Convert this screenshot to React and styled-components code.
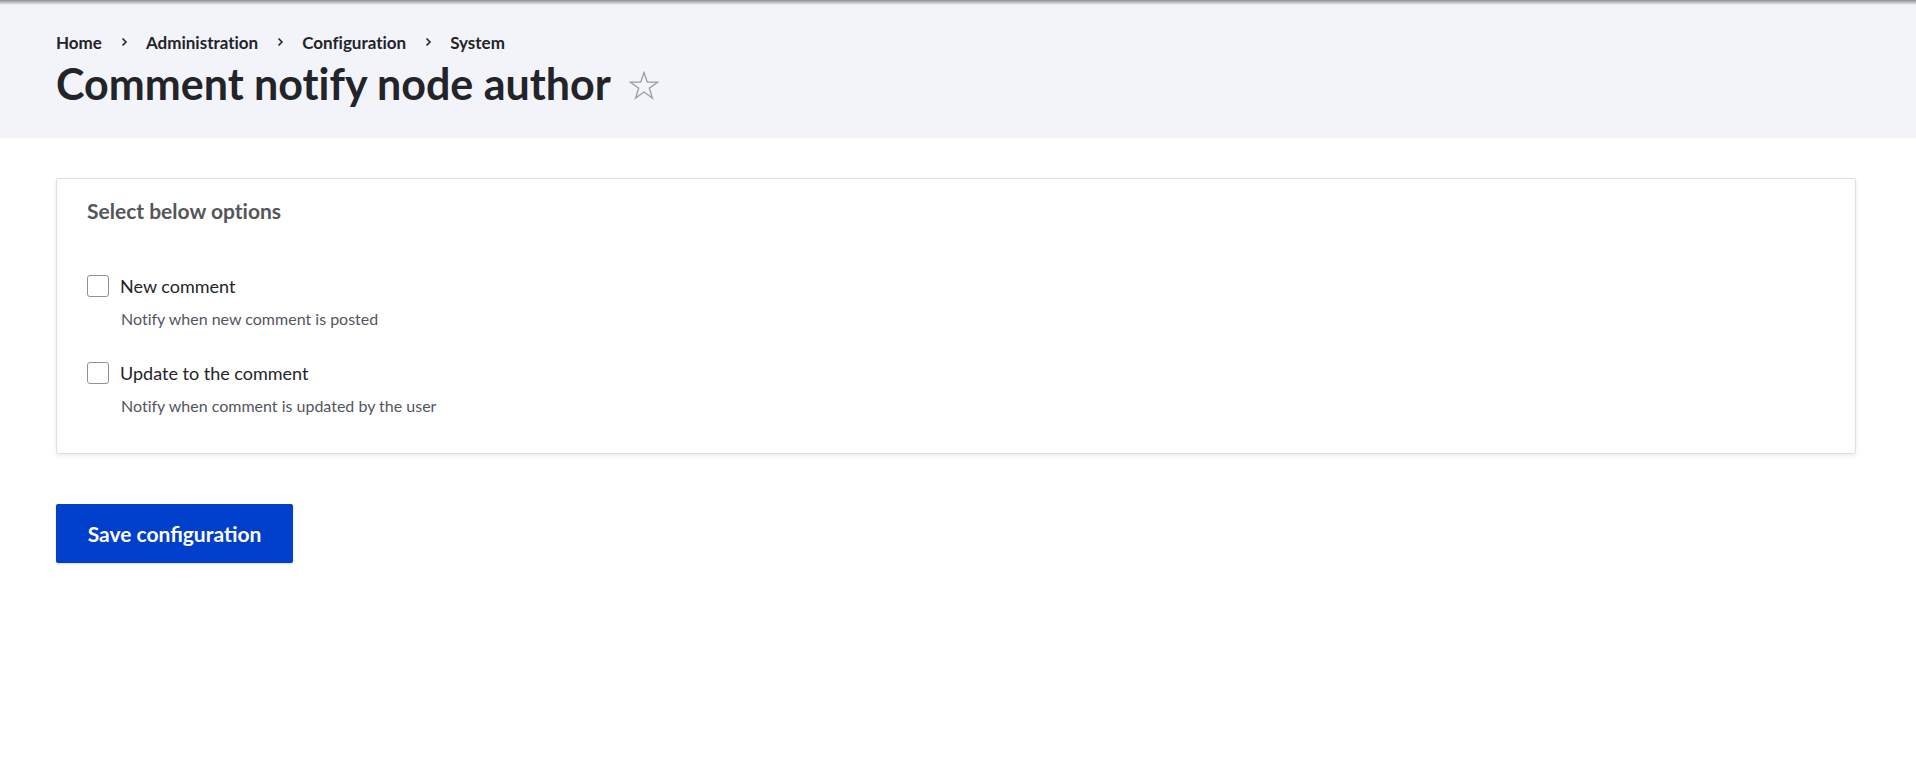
import { styled, createGlobalStyle } from "styled-components";

const GlobalStyle = createGlobalStyle`
  html, body {
    margin: 0;
    padding: 0;
    background: #ffffff;
  }
  body {
    font-family: Lato, "Open Sans", sans-serif;
    font-variant-ligatures: none;
    color: #232429;
  }
`;

const Page = styled.div`
  min-height: 768px;
  background: #ffffff;
`;

const Header = styled.header`
  position: relative;
  height: 138px;
  box-sizing: border-box;
  padding: 28px 56px 0 56px;
  background: #f3f4f9;

  &::before {
    content: "";
    position: absolute;
    left: 0;
    right: 0;
    top: 0;
    height: 5px;
    background: linear-gradient(rgba(0, 0, 0, 0.42), rgba(0, 0, 0, 0));
  }
`;

const Breadcrumb = styled.nav`
  display: flex;
  align-items: center;
  height: 28px;
  font-size: 17px;
  font-weight: 700;
  color: #232429;
`;

const Crumb = styled.span`
  display: inline-flex;
  align-items: center;
  white-space: nowrap;
`;

const Sep = styled.span`
  display: inline-flex;
  align-items: center;
  margin: 0 18px 0 19px;
`;

const TitleRow = styled.div`
  display: flex;
  align-items: center;
  margin-top: 1px;
`;

const Title = styled.h1`
  margin: 0;
  font-size: 43px;
  line-height: 54px;
  font-weight: 700;
  color: #232429;
`;

const Star = styled.span`
  display: inline-flex;
  margin-left: 18px;
  margin-top: 2px;
`;

const Main = styled.main`
  padding: 40px 60px 0 56px;
`;

const Card = styled.fieldset`
  margin: 0;
  min-width: 0;
  box-sizing: border-box;
  border: 1px solid #dedfe4;
  border-radius: 2px;
  box-shadow: 0 2px 4px rgba(0, 0, 0, 0.08);
  padding: 18px 30px 37px 30px;
`;

const Legend = styled.div`
  font-size: 21px;
  line-height: 28px;
  font-weight: 700;
  color: #55565b;
  margin-bottom: 48px;
`;

const Option = styled.div`
  display: flex;
  flex-direction: column;
  & + & {
    margin-top: 31px;
  }
`;

const OptionRow = styled.label`
  display: flex;
  align-items: center;
  gap: 11px;
  height: 26px;
  font-size: 18px;
  color: #232429;
  cursor: pointer;
`;

const Box = styled.span`
  width: 20px;
  height: 20px;
  border: 1px solid #8e929c;
  border-radius: 3px;
  background: #ffffff;
  flex-shrink: 0;
`;

const Description = styled.div`
  margin-left: 34px;
  margin-top: 10px;
  font-size: 16px;
  line-height: 20px;
  color: #545560;
`;

const Actions = styled.div`
  padding-top: 50px;
`;

const Button = styled.button`
  width: 237px;
  height: 59px;
  border: none;
  border-radius: 2px;
  background: #003ecc;
  color: #ffffff;
  font-family: Lato, "Open Sans", sans-serif;
  font-size: 21px;
  font-weight: 700;
  box-shadow: 0 1px 2px rgba(0, 0, 0, 0.15);
  cursor: pointer;
`;

function Chevron() {
  return (
    <svg width="7" height="10" viewBox="0 0 7 10" fill="none">
      <path d="M1.5 1.5 L5 5 L1.5 8.5" stroke="#232429" strokeWidth="1.6" />
    </svg>
  );
}

function StarIcon() {
  return (
    <svg width="30" height="29" viewBox="0 0 30 29" fill="none">
      <path
        d="M15 1.5 L18.3 11.2 L28.5 11.2 L20.3 17.3 L23.4 27 L15 21 L6.6 27 L9.7 17.3 L1.5 11.2 L11.7 11.2 Z"
        stroke="#9a9ba1"
        strokeWidth="1.3"
        strokeLinejoin="miter"
      />
    </svg>
  );
}

const crumbs = ["Home", "Administration", "Configuration", "System"];

const options = [
  { label: "New comment", desc: "Notify when new comment is posted" },
  { label: "Update to the comment", desc: "Notify when comment is updated by the user" },
];

export default function App() {
  return (
    <Page>
      <GlobalStyle />
      <Header>
        <Breadcrumb>
          {crumbs.map((c, i) => (
            <Crumb key={c}>
              {c}
              {i < crumbs.length - 1 && (
                <Sep>
                  <Chevron />
                </Sep>
              )}
            </Crumb>
          ))}
        </Breadcrumb>
        <TitleRow>
          <Title>Comment notify node author</Title>
          <Star>
            <StarIcon />
          </Star>
        </TitleRow>
      </Header>
      <Main>
        <Card>
          <Legend>Select below options</Legend>
          {options.map((o) => (
            <Option key={o.label}>
              <OptionRow>
                <Box />
                {o.label}
              </OptionRow>
              <Description>{o.desc}</Description>
            </Option>
          ))}
        </Card>
        <Actions>
          <Button>Save configuration</Button>
        </Actions>
      </Main>
    </Page>
  );
}
